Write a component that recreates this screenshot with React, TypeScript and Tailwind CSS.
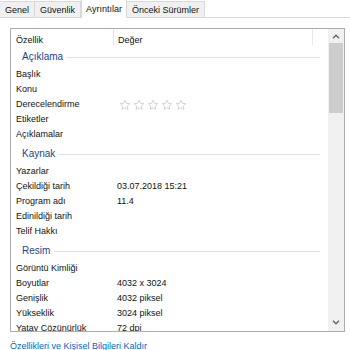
import React from 'react';

type Item = [string, string];
interface Group {
  title: string;
  items: Item[];
}

const GROUPS: Group[] = [
  {
    title: 'Açıklama',
    items: [
      ['Başlık', ''],
      ['Konu', ''],
      ['Derecelendirme', '*stars'],
      ['Etiketler', ''],
      ['Açıklamalar', ''],
    ],
  },
  {
    title: 'Kaynak',
    items: [
      ['Yazarlar', ''],
      ['Çekildiği tarih', '03.07.2018 15:21'],
      ['Program adı', '11.4'],
      ['Edinildiği tarih', ''],
      ['Telif Hakkı', ''],
    ],
  },
  {
    title: 'Resim',
    items: [
      ['Görüntü Kimliği', ''],
      ['Boyutlar', '4032 x 3024'],
      ['Genişlik', '4032 piksel'],
      ['Yükseklik', '3024 piksel'],
      ['Yatay Çözünürlük', '72 dpi'],
    ],
  },
];

const TABS = ['Genel', 'Güvenlik', 'Ayrıntılar', 'Önceki Sürümler'];

function Star() {
  return (
    <svg width="12" height="12" viewBox="0 0 24 24" fill="none" stroke="#c4c4c4" strokeWidth="1.5" strokeLinejoin="round">
      <path d="M12 2.5l2.9 6.1 6.6.8-4.9 4.6 1.3 6.6L12 17.3l-5.9 3.3 1.3-6.6-4.9-4.6 6.6-.8z" />
    </svg>
  );
}

function Stars() {
  return (
    <span className="ml-[2px] flex items-center gap-[2px]">
      {[0, 1, 2, 3, 4].map((i) => <Star key={i} />)}
    </span>
  );
}

function Row({ name, value }: { name: string; value: string }) {
  return (
    <div className="flex h-[15px] shrink-0 items-center leading-[15px]">
      <div className="w-[106px] shrink-0 pl-[5px] whitespace-nowrap">{name}</div>
      <div className="whitespace-nowrap">{value === '*stars' ? <Stars /> : value}</div>
    </div>
  );
}

function GroupHeader({ title }: { title: string }) {
  return (
    <div className="flex h-[22px] shrink-0 items-start pt-[6px]">
      <div className="flex w-full items-center pr-[8px]">
        <span className="pl-[11px] pr-[4px] leading-[12px] text-[10px] text-[#1e3f94] whitespace-nowrap">{title}</span>
        <div className="h-px flex-1 bg-[#dde2ea]" />
      </div>
    </div>
  );
}

function ScrollBar() {
  return (
    <div className="flex w-[16px] shrink-0 flex-col bg-[#f0f0f0]">
      <div className="flex h-[14px] items-center justify-center">
        <svg width="8" height="5" viewBox="0 0 8 5" fill="none" stroke="#606060" strokeWidth="1.3">
          <path d="M1 4.2L4 1.2l3 3" />
        </svg>
      </div>
      <div className="mx-[1px] h-[70px] bg-[#cdcdcd]" />
      <div className="flex-1" />
      <div className="flex h-[17px] items-center justify-center">
        <svg width="8" height="5" viewBox="0 0 8 5" fill="none" stroke="#606060" strokeWidth="1.3">
          <path d="M1 0.8L4 3.8l3-3" />
        </svg>
      </div>
    </div>
  );
}

export default function App() {
  return (
    <div
      className="h-[350px] w-[350px] overflow-hidden bg-white text-[9px] text-[#111111]"
      style={{ fontFamily: '"Liberation Sans", Arial, sans-serif' }}
    >
      {/* tab strip */}
      <div className="flex h-[18px] items-end border-b border-[#d9d9d9]">
        {TABS.map((tab) => {
          const active = tab === 'Ayrıntılar';
          return active ? (
            <div
              key={tab}
              className="relative -mb-px flex h-[19px] items-center border border-b-0 border-[#d9d9d9] bg-white px-[4px] leading-[12px]"
            >
              {tab}
            </div>
          ) : (
            <div
              key={tab}
              className="flex h-[16px] items-center border-t border-r border-[#d9d9d9] bg-[#f0f0f0] px-[5px] pt-[1px] leading-[12px]"
            >
              {tab}
            </div>
          );
        })}
      </div>

      {/* details list */}
      <div className="ml-[10px] mt-[10px] flex h-[304px] w-[335px] border border-[#adadad] bg-white">
        <div className="flex min-w-0 flex-1 flex-col overflow-hidden">
          <div className="flex h-[16px] shrink-0 items-start pt-[5px] leading-[12px]">
            <div className="w-[102px] shrink-0 pl-[5px]">Özellik</div>
            <div className="-mt-[5px] h-[16px] w-px bg-[#e5e5e5]" />
            <div className="pl-[4px]">Değer</div>
            <div className="flex-1" />
            <div className="-mt-[5px] mr-[15px] h-[16px] w-px bg-[#e8e8e8]" />
          </div>
          {GROUPS.map((g) => (
            <React.Fragment key={g.title}>
              <GroupHeader title={g.title} />
              {g.items.map(([n, v]) => (
                <Row key={n} name={n} value={v} />
              ))}
            </React.Fragment>
          ))}
        </div>
        <ScrollBar />
      </div>

      <div className="ml-[10px] mt-[8px] leading-[12px] text-[#0066cc] whitespace-nowrap">
        Özellikleri ve Kişisel Bilgileri Kaldır
      </div>
    </div>
  );
}
